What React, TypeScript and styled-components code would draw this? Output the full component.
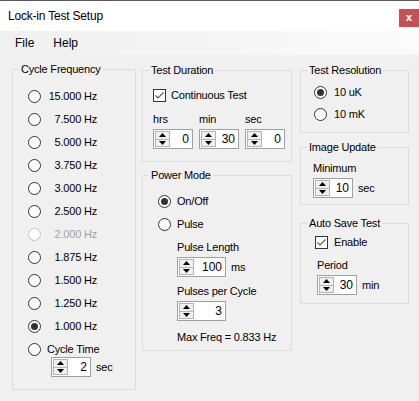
import styled, { createGlobalStyle } from "styled-components";

const GlobalStyle = createGlobalStyle`
  html, body {
    margin: 0;
    padding: 0;
    background: #f0f0f0;
  }
  body {
    font-family: "Liberation Sans", Arial, sans-serif;
    font-size: 11px;
    letter-spacing: -0.2px;
    color: #000;
  }
  #root {
    width: 419px;
    height: 401px;
    overflow: hidden;
  }
`;

const Window = styled.div`
  width: 419px;
  height: 401px;
  box-sizing: border-box;
  border-top: 1px solid #5a5a5a;
  display: flex;
  flex-direction: column;
  background: #f0f0f0;
`;

const TitleBar = styled.div`
  height: 30px;
  flex: none;
  background: #fff;
  display: flex;
  align-items: flex-start;
  justify-content: space-between;
`;

const Title = styled.div`
  font-size: 12px;
  line-height: 30px;
  padding-left: 8px;
`;

const CloseButton = styled.div`
  width: 20px;
  height: 18px;
  margin-top: 8px;
  background: #c75050;
  color: #fff;
  font-family: "DejaVu Sans", sans-serif;
  font-weight: bold;
  font-size: 10px;
  line-height: 17px;
  text-align: center;
`;

const MenuBar = styled.div`
  height: 24px;
  flex: none;
  display: flex;
  align-items: center;
  background: linear-gradient(to right, #f0f0f0, #fbfbfb);
  padding-left: 15px;
  gap: 19px;
  font-size: 12px;
  letter-spacing: 0;
`;

const Body = styled.div`
  flex: 1;
  display: flex;
  align-items: flex-start;
  padding: 14px 0 0 12px;
`;

const Column = styled.div<{ $width: number; $left: number }>`
  width: ${({ $width }) => $width}px;
  margin: 1px 0 0 ${({ $left }) => $left}px;
  display: flex;
  flex-direction: column;
`;

const Group = styled.div<{ $height: number; $padding: string; $top?: number; $width?: number }>`
  position: relative;
  box-sizing: border-box;
  width: ${({ $width }) => ($width ? `${$width}px` : "auto")};
  height: ${({ $height }) => $height}px;
  margin-top: ${({ $top }) => $top ?? 0}px;
  border: 1px solid #dcdcdc;
  padding: ${({ $padding }) => $padding};
  display: flex;
  flex-direction: column;
  align-items: flex-start;
`;

const Legend = styled.span`
  position: absolute;
  top: -7px;
  left: 6px;
  padding: 0 2px;
  line-height: 13px;
  background: #f0f0f0;
  white-space: nowrap;
`;

const OptionList = styled.div<{ $gap: number }>`
  display: flex;
  flex-direction: column;
  gap: ${({ $gap }) => $gap}px;
`;

const OptionRow = styled.div<{ $gap?: number }>`
  height: 16px;
  display: flex;
  align-items: center;
  gap: ${({ $gap }) => $gap ?? 6}px;
  white-space: nowrap;
`;

const RadioDot = styled.span<{ $checked?: boolean; $disabled?: boolean }>`
  flex: none;
  width: 13px;
  height: 13px;
  box-sizing: border-box;
  border-radius: 50%;
  border: 1px solid ${({ $disabled }) => ($disabled ? "#c4c4c4" : "#333")};
  background: #fff;
  display: flex;
  align-items: center;
  justify-content: center;

  &::after {
    content: "";
    display: ${({ $checked }) => ($checked ? "block" : "none")};
    width: 7px;
    height: 7px;
    border-radius: 50%;
    background: #333;
  }
`;

const HzLabel = styled.span<{ $disabled?: boolean }>`
  width: 50px;
  text-align: right;
  color: ${({ $disabled }) => ($disabled ? "#a0a0a0" : "#000")};
`;

const CheckBox = styled.span`
  flex: none;
  width: 13px;
  height: 13px;
  box-sizing: border-box;
  border: 1px solid #333;
  background: #fff;
  display: flex;
`;

const FieldsRow = styled.div`
  display: flex;
  gap: 6px;
  margin-top: 9px;
`;

const Field = styled.div<{ $top?: number; $left?: number }>`
  display: flex;
  flex-direction: column;
  align-items: flex-start;
  gap: 3px;
  margin: ${({ $top }) => $top ?? 0}px 0 0 ${({ $left }) => $left ?? 0}px;
`;

const FieldLabel = styled.span`
  line-height: 14px;
  white-space: nowrap;
`;

const SpinRow = styled.div<{ $left?: number }>`
  display: flex;
  align-items: center;
  gap: 5px;
  margin-left: ${({ $left }) => $left ?? 0}px;
`;

const Unit = styled.span`
  white-space: nowrap;
`;

const SpinBox = styled.div<{ $width: number }>`
  width: ${({ $width }) => $width}px;
  height: 20px;
  box-sizing: border-box;
  border: 1px solid #a0a0a0;
  background: #fff;
  display: flex;
`;

const SpinButtons = styled.div`
  flex: none;
  width: 15px;
  margin: 1px;
  box-sizing: border-box;
  border: 1px solid #b4b4b4;
  background: #f0f0f0;
  display: flex;
  flex-direction: column;
`;

const SpinHalf = styled.div<{ $upper?: boolean }>`
  flex: 1;
  display: flex;
  align-items: center;
  justify-content: center;
  border-bottom: ${({ $upper }) => ($upper ? "1px solid #b4b4b4" : "none")};
`;

const SpinValue = styled.div`
  flex: 1;
  text-align: right;
  padding-right: 3px;
  font-size: 12px;
  letter-spacing: 0;
  line-height: 18px;
`;

const SubBlock = styled.div`
  display: flex;
  flex-direction: column;
  align-items: flex-start;
  gap: 7px;
  margin: 8px 0 0 19px;
`;

const Note = styled.span`
  line-height: 14px;
  margin-top: 2px;
  white-space: nowrap;
`;

const Radio = ({ checked, disabled }: { checked?: boolean; disabled?: boolean }) => (
  <RadioDot $checked={checked} $disabled={disabled} />
);

const Check = () => (
  <CheckBox>
    <svg width="11" height="11" viewBox="0 0 11 11">
      <path d="M1.5 5.5 L4 8 L9.5 2.5" fill="none" stroke="#555" strokeWidth="1.1" />
    </svg>
  </CheckBox>
);

const Spinner = ({ value, width = 40 }: { value: string; width?: number }) => (
  <SpinBox $width={width}>
    <SpinButtons>
      <SpinHalf $upper>
        <svg width="7" height="4" viewBox="0 0 7 4">
          <path d="M0 4 L3.5 0 L7 4 Z" fill="#000" />
        </svg>
      </SpinHalf>
      <SpinHalf>
        <svg width="7" height="4" viewBox="0 0 7 4">
          <path d="M0 0 L3.5 4 L7 0 Z" fill="#000" />
        </svg>
      </SpinHalf>
    </SpinButtons>
    <SpinValue>{value}</SpinValue>
  </SpinBox>
);

const frequencies = ["15.000", "7.500", "5.000", "3.750", "3.000", "2.500", "2.000", "1.875", "1.500", "1.250", "1.000"];

export default function App() {
  return (
    <>
      <GlobalStyle />
      <Window>
        <TitleBar>
          <Title>Lock-in Test Setup</Title>
          <CloseButton>x</CloseButton>
        </TitleBar>
        <MenuBar>
          <span>File</span>
          <span>Help</span>
        </MenuBar>
        <Body>
          <Group $width={124} $height={321} $padding="18px 0 0 15px">
            <Legend>Cycle Frequency</Legend>
            <OptionList $gap={7}>
              {frequencies.map((f) => (
                <OptionRow key={f}>
                  <Radio checked={f === "1.000"} disabled={f === "2.000"} />
                  <HzLabel $disabled={f === "2.000"}>{f} Hz</HzLabel>
                </OptionRow>
              ))}
              <OptionRow>
                <Radio />
                <span>Cycle Time</span>
              </OptionRow>
            </OptionList>
            <SpinRow $left={23}>
              <Spinner value="2" />
              <Unit>sec</Unit>
            </SpinRow>
          </Group>

          <Column $width={150} $left={6}>
            <Group $height={92} $padding="16px 0 0 10px">
              <Legend>Test Duration</Legend>
              <OptionRow $gap={5}>
                <Check />
                <span>Continuous Test</span>
              </OptionRow>
              <FieldsRow>
                <Field>
                  <FieldLabel>hrs</FieldLabel>
                  <Spinner value="0" />
                </Field>
                <Field>
                  <FieldLabel>min</FieldLabel>
                  <Spinner value="30" />
                </Field>
                <Field>
                  <FieldLabel>sec</FieldLabel>
                  <Spinner value="0" />
                </Field>
              </FieldsRow>
            </Group>
            <Group $height={176} $top={13} $padding="17px 0 0 15px">
              <Legend>Power Mode</Legend>
              <OptionList $gap={7}>
                <OptionRow>
                  <Radio checked />
                  <span>On/Off</span>
                </OptionRow>
                <OptionRow>
                  <Radio />
                  <span>Pulse</span>
                </OptionRow>
              </OptionList>
              <SubBlock>
                <Field>
                  <FieldLabel>Pulse Length</FieldLabel>
                  <SpinRow>
                    <Spinner value="100" width={49} />
                    <Unit>ms</Unit>
                  </SpinRow>
                </Field>
                <Field>
                  <FieldLabel>Pulses per Cycle</FieldLabel>
                  <Spinner value="3" width={49} />
                </Field>
                <Note>Max Freq = 0.833 Hz</Note>
              </SubBlock>
            </Group>
          </Column>

          <Column $width={109} $left={8}>
            <Group $height={63} $padding="13px 0 0 13px">
              <Legend>Test Resolution</Legend>
              <OptionList $gap={6}>
                <OptionRow $gap={7}>
                  <Radio checked />
                  <span>10 uK</span>
                </OptionRow>
                <OptionRow $gap={7}>
                  <Radio />
                  <span>10 mK</span>
                </OptionRow>
              </OptionList>
            </Group>
            <Group $height={58} $top={14} $padding="13px 0 0 12px">
              <Legend>Image Update</Legend>
              <Field>
                <FieldLabel>Minimum</FieldLabel>
                <SpinRow>
                  <Spinner value="10" />
                  <Unit>sec</Unit>
                </SpinRow>
              </Field>
            </Group>
            <Group $height={81} $top={18} $padding="10px 0 0 14px">
              <Legend>Auto Save Test</Legend>
              <OptionRow>
                <Check />
                <span>Enable</span>
              </OptionRow>
              <Field $top={8} $left={2}>
                <FieldLabel>Period</FieldLabel>
                <SpinRow>
                  <Spinner value="30" />
                  <Unit>min</Unit>
                </SpinRow>
              </Field>
            </Group>
          </Column>
        </Body>
      </Window>
    </>
  );
}
